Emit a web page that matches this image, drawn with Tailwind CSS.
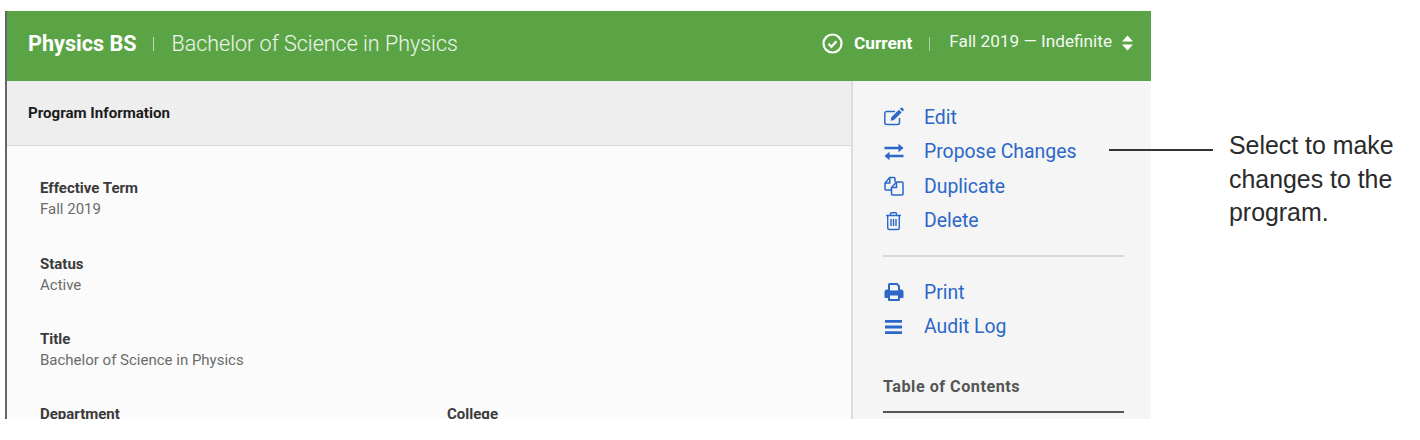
<!DOCTYPE html>
<html lang="en">
<head>
  <meta charset="UTF-8" />
  <title>Physics BS</title>
  <script src="https://cdn.jsdelivr.net/npm/@tailwindcss/browser@4"></script>
</head>
<body class="bg-white font-['Roboto',sans-serif] overflow-hidden">
  <div class="relative w-[1420px] h-[440px]">
    <div class="ml-[5px] pt-[11px] w-[1146px] h-[419px] overflow-hidden">
      <div class="h-[408px] border-l-2 border-[#666] flex flex-col">
        <!-- Header -->
        <div class="h-[70px] shrink-0 bg-[#5ba446] flex items-center pl-[21px] pr-[18px] pb-[4px] text-white">
          <span class="text-[21.6px] font-bold">Physics BS</span>
          <span class="w-px h-[14px] bg-white/60 ml-[17px] mr-[18px]"></span>
          <span class="text-[21.5px] font-light text-white/90 -ml-px">Bachelor of Science in Physics</span>
          <svg class="ml-auto -mt-[2px]" width="21" height="21" viewBox="0 0 21 21" fill="none" stroke="white" stroke-width="2.200"><circle cx="10.500" cy="10.500" r="9"/><path d="M6.500 10.800l3 3 5-5.600"/></svg>
          <span class="ml-[11px] text-[17.300px] font-bold">Current</span>
          <span class="w-px h-[14px] bg-white/50 ml-[17px] mr-[19px]"></span>
          <span class="text-[17.200px] -mt-[4px] text-white/95">Fall 2019 — Indefinite</span>
          <svg class="ml-[10px] -mt-[2px]" width="11" height="16" viewBox="0 0 11 16" fill="white"><path d="M5.500 0.500L11 6.500H0zM0 9.500h11L5.500 15.500z"/></svg>
        </div>
        <div class="flex flex-1 min-h-0">
          <!-- Main column -->
          <div class="w-[844px] shrink-0 bg-[#fbfbfb]">
            <div class="h-[65px] bg-[#eeeeee] border-b border-[#d9d9d9] flex items-center pl-[21px]">
              <h2 class="text-[15.100px] font-bold text-[#1c1c1c]">Program Information</h2>
            </div>
            <div class="pl-[33px] pt-[32px] text-[15px] leading-[21px]">
              <div class="h-[75.500px]">
                <div class="font-bold text-[#3a3a3a]">Effective Term</div>
                <div class="text-[#6b6b6b]">Fall 2019</div>
              </div>
              <div class="h-[75.500px]">
                <div class="font-bold text-[#3a3a3a]">Status</div>
                <div class="text-[#6b6b6b]">Active</div>
              </div>
              <div class="h-[75px]">
                <div class="font-bold text-[#3a3a3a]">Title</div>
                <div class="text-[#6b6b6b]">Bachelor of Science in Physics</div>
              </div>
              <div class="grid grid-cols-[407px_1fr] font-bold text-[#3a3a3a]">
                <div>Department</div>
                <div>College</div>
              </div>
            </div>
          </div>
          <!-- Sidebar -->
          <div class="flex-1 bg-[#f5f5f5] border-l-2 border-[#dcdcdc] pl-[30px] pr-[27px] pt-[19px] text-[19.400px] text-[#2b68c8]">
            <ul class="flex flex-col">
              <li class="h-[34.500px] flex items-center gap-[20px]">
                <svg class="ml-px w-[20px] h-[20px] shrink-0" viewBox="0 0 20 20" fill="none" stroke="#2b68c8" stroke-width="1.500"><path d="M15.500 11v4.500a2 2 0 0 1-2 2H2.800a2 2 0 0 1-2-2V6.500a2 2 0 0 1 2-2H11"/><path fill="#2b68c8" stroke="none" d="M16.800 0.800a1 1 0 0 1 1.400 0l1.300 1.300a1 1 0 0 1 0 1.400l-1 1-2.700-2.700zM14.900 2.700l2.700 2.700-7.600 7.600-3.400.7.700-3.400z"/></svg>
                <span>Edit</span>
              </li>
              <li class="h-[34.500px] flex items-center gap-[20px]">
                <svg class="ml-px w-[20px] h-[20px] shrink-0" viewBox="0 0 20 20" fill="#2b68c8"><path d="M0.500 4.700h14V1.800l5 4.200-5 4.200V7.300H0.500zM19.500 12.700H5.500V9.800l-5 4.200 5 4.200v-2.900h14z"/></svg>
                <span>Propose Changes</span>
              </li>
              <li class="h-[34.500px] flex items-center gap-[20px]">
                <svg class="ml-px w-[20px] h-[20px] shrink-0" viewBox="0 0 20 20" fill="none" stroke="#2b68c8" stroke-width="1.500"><path d="M7 14H2a1 1 0 0 1-1-1V7l4.800-5.500H10a1 1 0 0 1 1 1V6"/><path d="M5.800 1.500V7H1"/><path d="M7.500 11.500L12.500 6H18a1 1 0 0 1 1 1v11a1 1 0 0 1-1 1H8.500a1 1 0 0 1-1-1z"/><path d="M12.500 6v5.500h-5"/></svg>
                <span>Duplicate</span>
              </li>
              <li class="h-[34.500px] flex items-center gap-[20px]">
                <svg class="ml-px w-[20px] h-[20px] shrink-0" viewBox="0 0 20 20" fill="none" stroke="#2b68c8" stroke-width="1.400"><path d="M2 4.500h15M6.500 4.500V2.800a1 1 0 0 1 1-1h4a1 1 0 0 1 1 1v1.700M3.700 4.500V17a1.500 1.500 0 0 0 1.500 1.500h8.600a1.500 1.500 0 0 0 1.500-1.500V4.500M7 8v7M9.500 8v7M12 8v7"/></svg>
                <span>Delete</span>
              </li>
            </ul>
            <div class="h-0.5 bg-[#d8d8d8] mt-[17px] mb-[18px]"></div>
            <ul class="flex flex-col">
              <li class="h-[34.500px] flex items-center gap-[20px]">
                <svg class="ml-px w-[20px] h-[20px] shrink-0" viewBox="0 0 20 20" fill="#2b68c8"><path fill-rule="evenodd" d="M4 2.500A1.500 1.500 0 0 1 5.500 1h7.800L16 3.700V7.500h1A2.500 2.500 0 0 1 19.500 10v5a1 1 0 0 1-1 1H16v2a1 1 0 0 1-1 1H5a1 1 0 0 1-1-1v-2H1.500a1 1 0 0 1-1-1v-5A2.500 2.500 0 0 1 3 7.500h1zM6 3v5.500h8V4.500L12.500 3zM6 13.500V17h8v-3.500z"/></svg>
                <span>Print</span>
              </li>
              <li class="h-[34.500px] flex items-center gap-[20px]">
                <svg class="ml-px w-[20px] h-[20px] shrink-0" viewBox="0 0 20 20" fill="#2b68c8"><path d="M1 3h17v2.800H1zM1 8.600h17v2.800H1zM1 14.200h17V17H1z"/></svg>
                <span>Audit Log</span>
              </li>
            </ul>
            <h3 class="mt-[33px] text-[16.200px] leading-[20px] font-bold tracking-[0.5px] text-[#555555]">Table of Contents</h3>
            <div class="h-0.5 bg-[#555555] mt-[14px]"></div>
          </div>
        </div>
      </div>
    </div>
    <!-- Callout -->
    <div class="absolute left-[1109px] top-[149px] w-[104px] h-0.5 bg-[#333]"></div>
    <p class="absolute left-[1229px] top-[129px] font-['Liberation_Sans',sans-serif] text-[24.900px] leading-[33.500px] text-[#2a2a2a]">Select to make<br />changes to the<br />program.</p>
  </div>
</body>
</html>
